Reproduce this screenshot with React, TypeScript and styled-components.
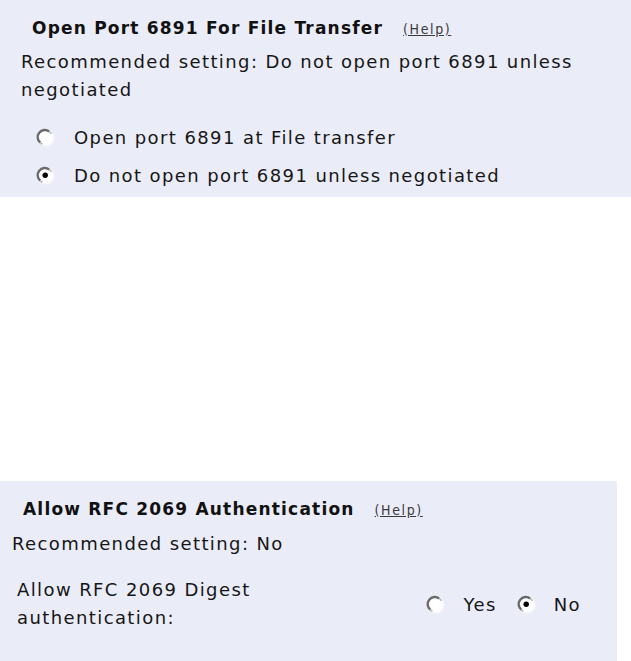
import { FC } from "react";
import styled, { createGlobalStyle } from "styled-components";

const GlobalStyle = createGlobalStyle`
  html, body {
    margin: 0;
    padding: 0;
    background: #ffffff;
  }
  body {
    font-family: "DejaVu Sans", "Liberation Sans", sans-serif;
    color: #161616;
  }
`;

const Page = styled.div`
  width: 631px;
  height: 661px;
  display: flex;
  flex-direction: column;
  justify-content: space-between;
`;

const Panel = styled.section<{ width: number; pad: number }>`
  box-sizing: border-box;
  width: ${({ width }) => width}px;
  background: #eaecf8;
  padding: 16px 20px 8px ${({ pad }) => pad}px;
  display: flex;
  flex-direction: column;
`;

const TitleRow = styled.div`
  display: flex;
  align-items: baseline;
  gap: 20px;
  margin-left: 11px;
  height: 24px;
  line-height: 24px;
`;

const Title = styled.h2`
  margin: 0;
  font-size: 17px;
  font-weight: bold;
  letter-spacing: 1.2px;
  color: #111;
`;

const HelpLink = styled.a`
  font-family: "DejaVu Sans Condensed", "DejaVu Sans", sans-serif;
  font-size: 14px;
  letter-spacing: 1.6px;
  color: #3a3a3a;
  text-decoration: underline;
  cursor: pointer;
`;

const Text = styled.p<{ top: number }>`
  margin: ${({ top }) => top}px 0 0;
  font-size: 18px;
  letter-spacing: 1.4px;
  line-height: 28px;
`;

const RadioList = styled.div`
  display: flex;
  flex-direction: column;
  gap: 10px;
  margin: 19px 0 0 15px;
`;

const RadioItem = styled.label`
  display: flex;
  align-items: center;
  height: 28px;
  font-size: 18px;
  letter-spacing: 1.4px;
  cursor: pointer;
`;

const RadioMark = styled.svg<{ gap: number }>`
  flex: none;
  width: 19px;
  height: 19px;
  margin-right: ${({ gap }) => gap}px;
`;

const OptionRow = styled.div`
  display: flex;
  align-items: center;
  justify-content: space-between;
  margin: 18px 16px 21px 5px;
`;

const OptionLabel = styled.div`
  width: 270px;
  font-size: 18px;
  letter-spacing: 1.4px;
  line-height: 28px;
`;

const InlineRadios = styled.div`
  display: flex;
  align-items: center;
  gap: 20px;
`;

const Radio: FC<{ checked?: boolean; gap: number }> = ({ checked, gap }) => (
  <RadioMark gap={gap} viewBox="0 0 19 19">
    <circle cx="10" cy="10" r="8.6" fill="#f7f7fb" />
    <circle cx="9.5" cy="9.5" r="7.4" fill="#ffffff" />
    <path
      d="M4.3 14.6 A7 7 0 0 1 13.2 3.6"
      fill="none"
      stroke="#6a6a6a"
      strokeWidth="2.4"
    />
    <path
      d="M13.2 3.6 A7 7 0 0 1 15.4 5.8"
      fill="none"
      stroke="#b8b8b8"
      strokeWidth="1.6"
    />
    <path
      d="M4.3 14.6 A7 7 0 0 0 6.4 16.2"
      fill="none"
      stroke="#b8b8b8"
      strokeWidth="1.6"
    />
    {checked && <circle cx="9.2" cy="9.2" r="2.7" fill="#000" />}
  </RadioMark>
);

export default function App() {
  return (
    <>
      <GlobalStyle />
      <Page>
        <Panel width={631} pad={21}>
          <TitleRow>
            <Title>Open Port 6891 For File Transfer</Title>
            <HelpLink>(Help)</HelpLink>
          </TitleRow>
          <Text top={8}>
            Recommended setting: Do not open port 6891 unless negotiated
          </Text>
          <RadioList>
            <RadioItem>
              <Radio gap={19} />
              Open port 6891 at File transfer
            </RadioItem>
            <RadioItem>
              <Radio gap={19} checked />
              Do not open port 6891 unless negotiated
            </RadioItem>
          </RadioList>
        </Panel>

        <Panel width={617} pad={12}>
          <TitleRow>
            <Title>Allow RFC 2069 Authentication</Title>
            <HelpLink>(Help)</HelpLink>
          </TitleRow>
          <Text top={9}>Recommended setting: No</Text>
          <OptionRow>
            <OptionLabel>Allow RFC 2069 Digest authentication:</OptionLabel>
            <InlineRadios>
              <RadioItem>
                <Radio gap={18} />
                Yes
              </RadioItem>
              <RadioItem>
                <Radio gap={18} checked />
                No
              </RadioItem>
            </InlineRadios>
          </OptionRow>
        </Panel>
      </Page>
    </>
  );
}
